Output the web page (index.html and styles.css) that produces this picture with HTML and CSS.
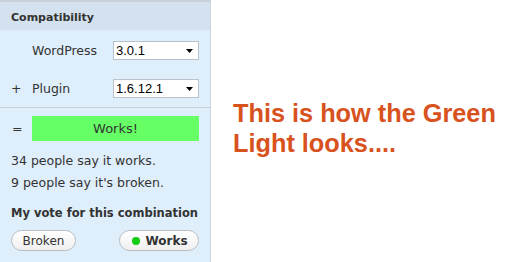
FILE: index.html
```html
<!DOCTYPE html>
<html>
<head>
<meta charset="utf-8">
<link rel="stylesheet" href="styles.css">
</head>
<body>
<div class="page">
  <aside class="panel">
    <div class="panel-head">Compatibility</div>
    <div class="combo">
      <span class="sym"></span>
      <span class="label">WordPress</span>
      <div class="select"><span>3.0.1</span><svg class="arrow" width="7" height="4" viewBox="0 0 7 4"><path d="M0 0h7L3.5 4z" fill="#000"/></svg></div>
      <span class="sym">+</span>
      <span class="label">Plugin</span>
      <div class="select"><span>1.6.12.1</span><svg class="arrow" width="7" height="4" viewBox="0 0 7 4"><path d="M0 0h7L3.5 4z" fill="#000"/></svg></div>
    </div>
    <div class="result">
      <div class="result-row">
        <span class="sym eq">=</span>
        <div class="status">Works!</div>
      </div>
      <p class="stats">34 people say it works.<br>9 people say it's broken.</p>
      <h3 class="vote-title">My vote for this combination</h3>
      <div class="vote-buttons">
        <button class="pill">Broken</button>
        <button class="pill pill-active"><span class="dot"></span>Works</button>
      </div>
    </div>
  </aside>
  <p class="caption">This is how the Green Light looks....</p>
</div>
</body>
</html>
```
FILE: styles.css
```css
html, body {
  margin: 0;
  padding: 0;
  background: #fff;
}
.page {
  display: flex;
  align-items: flex-start;
  height: 262px;
  overflow: hidden;
}
.panel {
  width: 211px;
  height: 262px;
  box-sizing: border-box;
  flex: none;
  background: #deeefb;
  border-top: 2px solid #c7d0d8;
  border-right: 1px solid #c9d6e2;
  font-family: "DejaVu Sans", Verdana, sans-serif;
  font-size: 12.5px;
  color: #333;
}
.panel-head {
  height: 28px;
  box-sizing: border-box;
  padding: 9px 11px 0;
  line-height: 13px;
  background: #d3e2ee;
  font-weight: bold;
  font-size: 11px;
}
.combo {
  display: grid;
  grid-template-columns: 21px 81px 86px;
  row-gap: 19px;
  align-items: center;
  padding: 11px 0 9px 11px;
  border-bottom: 1px solid #c6ced6;
}
.sym {
  font-size: 12.5px;
}
.select {
  height: 19px;
  box-sizing: border-box;
  border: 1px solid #b9c2cb;
  background: #fff;
  display: flex;
  align-items: center;
  justify-content: space-between;
  padding: 0 5px 0 2px;
  font-family: "Liberation Sans", Arial, sans-serif;
  font-size: 13px;
  color: #000;
}
.arrow {
  display: block;
}
.result {
  padding: 8px 11px 0;
}
.result-row {
  display: flex;
  align-items: center;
}
.eq {
  width: 21px;
  padding-left: 1px;
  box-sizing: border-box;
}
.status {
  flex: 1;
  height: 25px;
  line-height: 25px;
  text-align: center;
  background: #66ff66;
  font-size: 13px;
}
.stats {
  margin: 9px 0 0;
  line-height: 22px;
  font-size: 12.5px;
}
.vote-title {
  margin: 11px 0 0;
  font-size: 11.5px;
  line-height: 16px;
  font-weight: bold;
}
.vote-buttons {
  display: flex;
  justify-content: space-between;
  margin-top: 9px;
}
.pill {
  height: 21px;
  box-sizing: border-box;
  border: 1px solid #b8bcc0;
  border-radius: 11px;
  background: linear-gradient(#ffffff, #efefef);
  font-family: "DejaVu Sans", Verdana, sans-serif;
  font-size: 12px;
  color: #333;
  padding: 0;
  display: flex;
  align-items: center;
  justify-content: center;
}
.pill:first-child {
  width: 65px;
}
.pill-active {
  width: 80px;
  font-weight: bold;
  gap: 5px;
  padding-left: 2px;
}
.dot {
  width: 8px;
  height: 8px;
  border-radius: 50%;
  background: #11cc11;
}
.caption {
  margin: 98px 0 0 22px;
  font-family: "Liberation Sans", Arial, sans-serif;
  font-weight: bold;
  font-size: 25.3px;
  line-height: 30px;
  color: #d8521e;
}
```
